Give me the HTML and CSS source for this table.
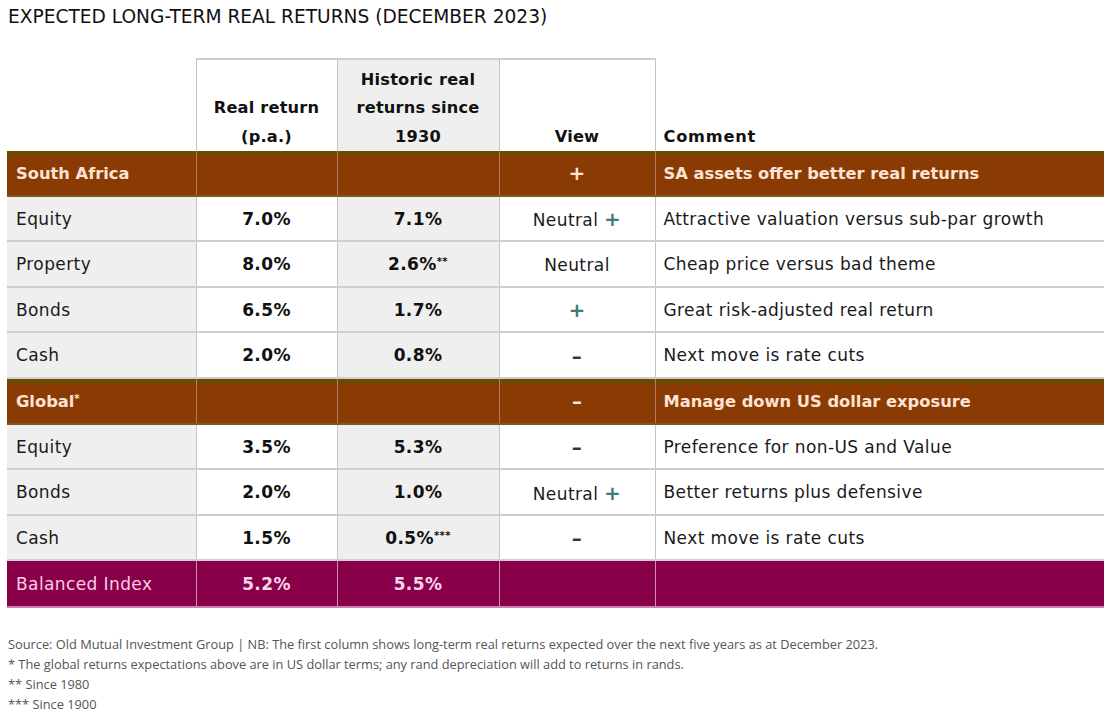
FILE: index.html
```html
<!DOCTYPE html>
<html lang="en">
<head>
<meta charset="utf-8">
<title>Expected long-term real returns</title>
<link rel="stylesheet" href="styles.css">
</head>
<body>
<h1 class="title">EXPECTED LONG-TERM REAL RETURNS (DECEMBER 2023)</h1>
<table class="returns">
  <colgroup>
    <col class="c1"><col class="c2"><col class="c3"><col class="c4"><col class="c5">
  </colgroup>
  <thead>
    <tr class="head">
      <th class="blank"></th>
      <th class="hcell">Real return<br>(p.a.)</th>
      <th class="hcell grey">Historic real<br>returns since<br>1930</th>
      <th class="hcell">View</th>
      <th class="hcomment">Comment</th>
    </tr>
  </thead>
  <tbody>
    <tr class="section">
      <td class="label">South Africa</td><td></td><td></td>
      <td class="view"><span class="sign">+</span></td>
      <td class="comment">SA assets offer better real returns</td>
    </tr>
    <tr>
      <td class="label">Equity</td><td class="num">7.0%</td><td class="num grey">7.1%</td>
      <td class="view">Neutral <span class="sign pos">+</span></td>
      <td class="comment">Attractive valuation versus sub-par growth</td>
    </tr>
    <tr>
      <td class="label">Property</td><td class="num">8.0%</td><td class="num grey">2.6%<sup>**</sup></td>
      <td class="view">Neutral</td>
      <td class="comment">Cheap price versus bad theme</td>
    </tr>
    <tr>
      <td class="label">Bonds</td><td class="num">6.5%</td><td class="num grey">1.7%</td>
      <td class="view"><span class="sign pos">+</span></td>
      <td class="comment">Great risk-adjusted real return</td>
    </tr>
    <tr>
      <td class="label">Cash</td><td class="num">2.0%</td><td class="num grey">0.8%</td>
      <td class="view"><span class="sign neg">&ndash;</span></td>
      <td class="comment">Next move is rate cuts</td>
    </tr>
    <tr class="section">
      <td class="label">Global<sup>*</sup></td><td></td><td></td>
      <td class="view"><span class="sign">&ndash;</span></td>
      <td class="comment">Manage down US dollar exposure</td>
    </tr>
    <tr>
      <td class="label">Equity</td><td class="num">3.5%</td><td class="num grey">5.3%</td>
      <td class="view"><span class="sign neg">&ndash;</span></td>
      <td class="comment">Preference for non-US and Value</td>
    </tr>
    <tr>
      <td class="label">Bonds</td><td class="num">2.0%</td><td class="num grey">1.0%</td>
      <td class="view">Neutral <span class="sign pos">+</span></td>
      <td class="comment">Better returns plus defensive</td>
    </tr>
    <tr>
      <td class="label">Cash</td><td class="num">1.5%</td><td class="num grey">0.5%<sup>***</sup></td>
      <td class="view"><span class="sign neg">&ndash;</span></td>
      <td class="comment">Next move is rate cuts</td>
    </tr>
    <tr class="total">
      <td class="label">Balanced Index</td><td class="num">5.2%</td><td class="num">5.5%</td>
      <td></td><td></td>
    </tr>
  </tbody>
</table>
<div class="notes">
  <p>Source: Old Mutual Investment Group | NB: The first column shows long-term real returns expected over the next five years as at December 2023.</p>
  <p>* The global returns expectations above are in US dollar terms; any rand depreciation will add to returns in rands.</p>
  <p>** Since 1980</p>
  <p>*** Since 1900</p>
</div>
</body>
</html>
```

FILE: styles.css
```css
html, body {
  background: #ffffff;
}
body {
  margin: 0;
  padding: 4px 7px 0 7px;
  font-family: "DejaVu Sans", "Open Sans", sans-serif;
  color: #1a1a1a;
}
.title {
  margin: 0 0 0 1px;
  font-size: 18.6px;
  line-height: 26px;
  font-weight: 400;
  color: #111111;
}
.returns {
  margin-top: 28px;
  width: 1097px;
  border-collapse: collapse;
  table-layout: fixed;
  font-size: 17px;
  letter-spacing: 0.4px;
}
.c1 { width: 189px; }
.c2 { width: 141px; }
.c3 { width: 162px; }
.c4 { width: 156px; }
.c5 { width: 449px; }

.returns th,
.returns td {
  padding: 0;
  height: 41.5px;
  border-bottom: 2px solid #cfcfcf;
  border-left: 1px solid #c4c4c4;
  border-right: 1px solid #c4c4c4;
  text-align: center;
  vertical-align: middle;
  line-height: 20px;
}
.returns tr > :first-child { border-left: none; }
.returns tr > :last-child { border-right: none; }

.head th {
  height: 91px;
  vertical-align: bottom;
  font-weight: 700;
  font-size: 16.2px;
  letter-spacing: 0.2px;
  line-height: 28.5px;
  padding-bottom: 0;
  color: #111;
  border-bottom: none;
}
.head .hcell {
  border-top: 2px solid #cfcfcf;
  background: #ffffff;
}
.head .hcell.grey { background: #efefef; }
.head .blank { border: none; }
.head .hcomment {
  text-align: left;
  padding-left: 8px;
  border-left: 1px solid #c4c4c4;
  letter-spacing: 0.8px;
}

.returns td.label {
  text-align: left;
  padding-left: 9px;
  background: #efefef;
  font-weight: 400;
}
.returns td.num {
  font-weight: 700;
  color: #111;
}
.returns td.grey { background: #efefef; }
.returns td.comment {
  text-align: left;
  padding-left: 8px;
}
.returns td.view { padding-top: 2px; }

sup {
  font-size: 10px;
  vertical-align: 5px;
  line-height: 0;
}

.sign {
  font-weight: 700;
  font-size: 20px;
  line-height: 1;
}
.sign.pos { color: #3d7d77; }
.sign.neg { color: #333333; }

.returns .section td {
  background: linear-gradient(#6e4a00 0, #6e4a00 5px, #8a3b03 5px, #8a3b03 100%);
  border-bottom: 2px solid #7a5a1e;
  border-left-color: #b07d6a;
  border-right-color: #b07d6a;
  color: #fde3d6;
  font-weight: 700;
  font-size: 16.3px;
  letter-spacing: 0;
  padding-top: 3px;
  height: 40.9px;
}
.section .sign { color: #fde3d6; }

.returns .total td {
  background: #88004a;
  color: #f9cde3;
  border-top: 1px solid #cf7fa8;
  border-bottom: 2px solid #cf7fa8;
  border-left-color: #d38db0;
  border-right-color: #d38db0;
  height: 44.5px;
}
.returns .total td.num { color: #fbd6e8; }

.notes {
  margin-top: 26px;
  font-family: "Open Sans", sans-serif;
  font-size: 12.8px;
  color: #555555;
  line-height: 20px;
}
.notes p {
  margin: 0 0 0 1px;
}
```
